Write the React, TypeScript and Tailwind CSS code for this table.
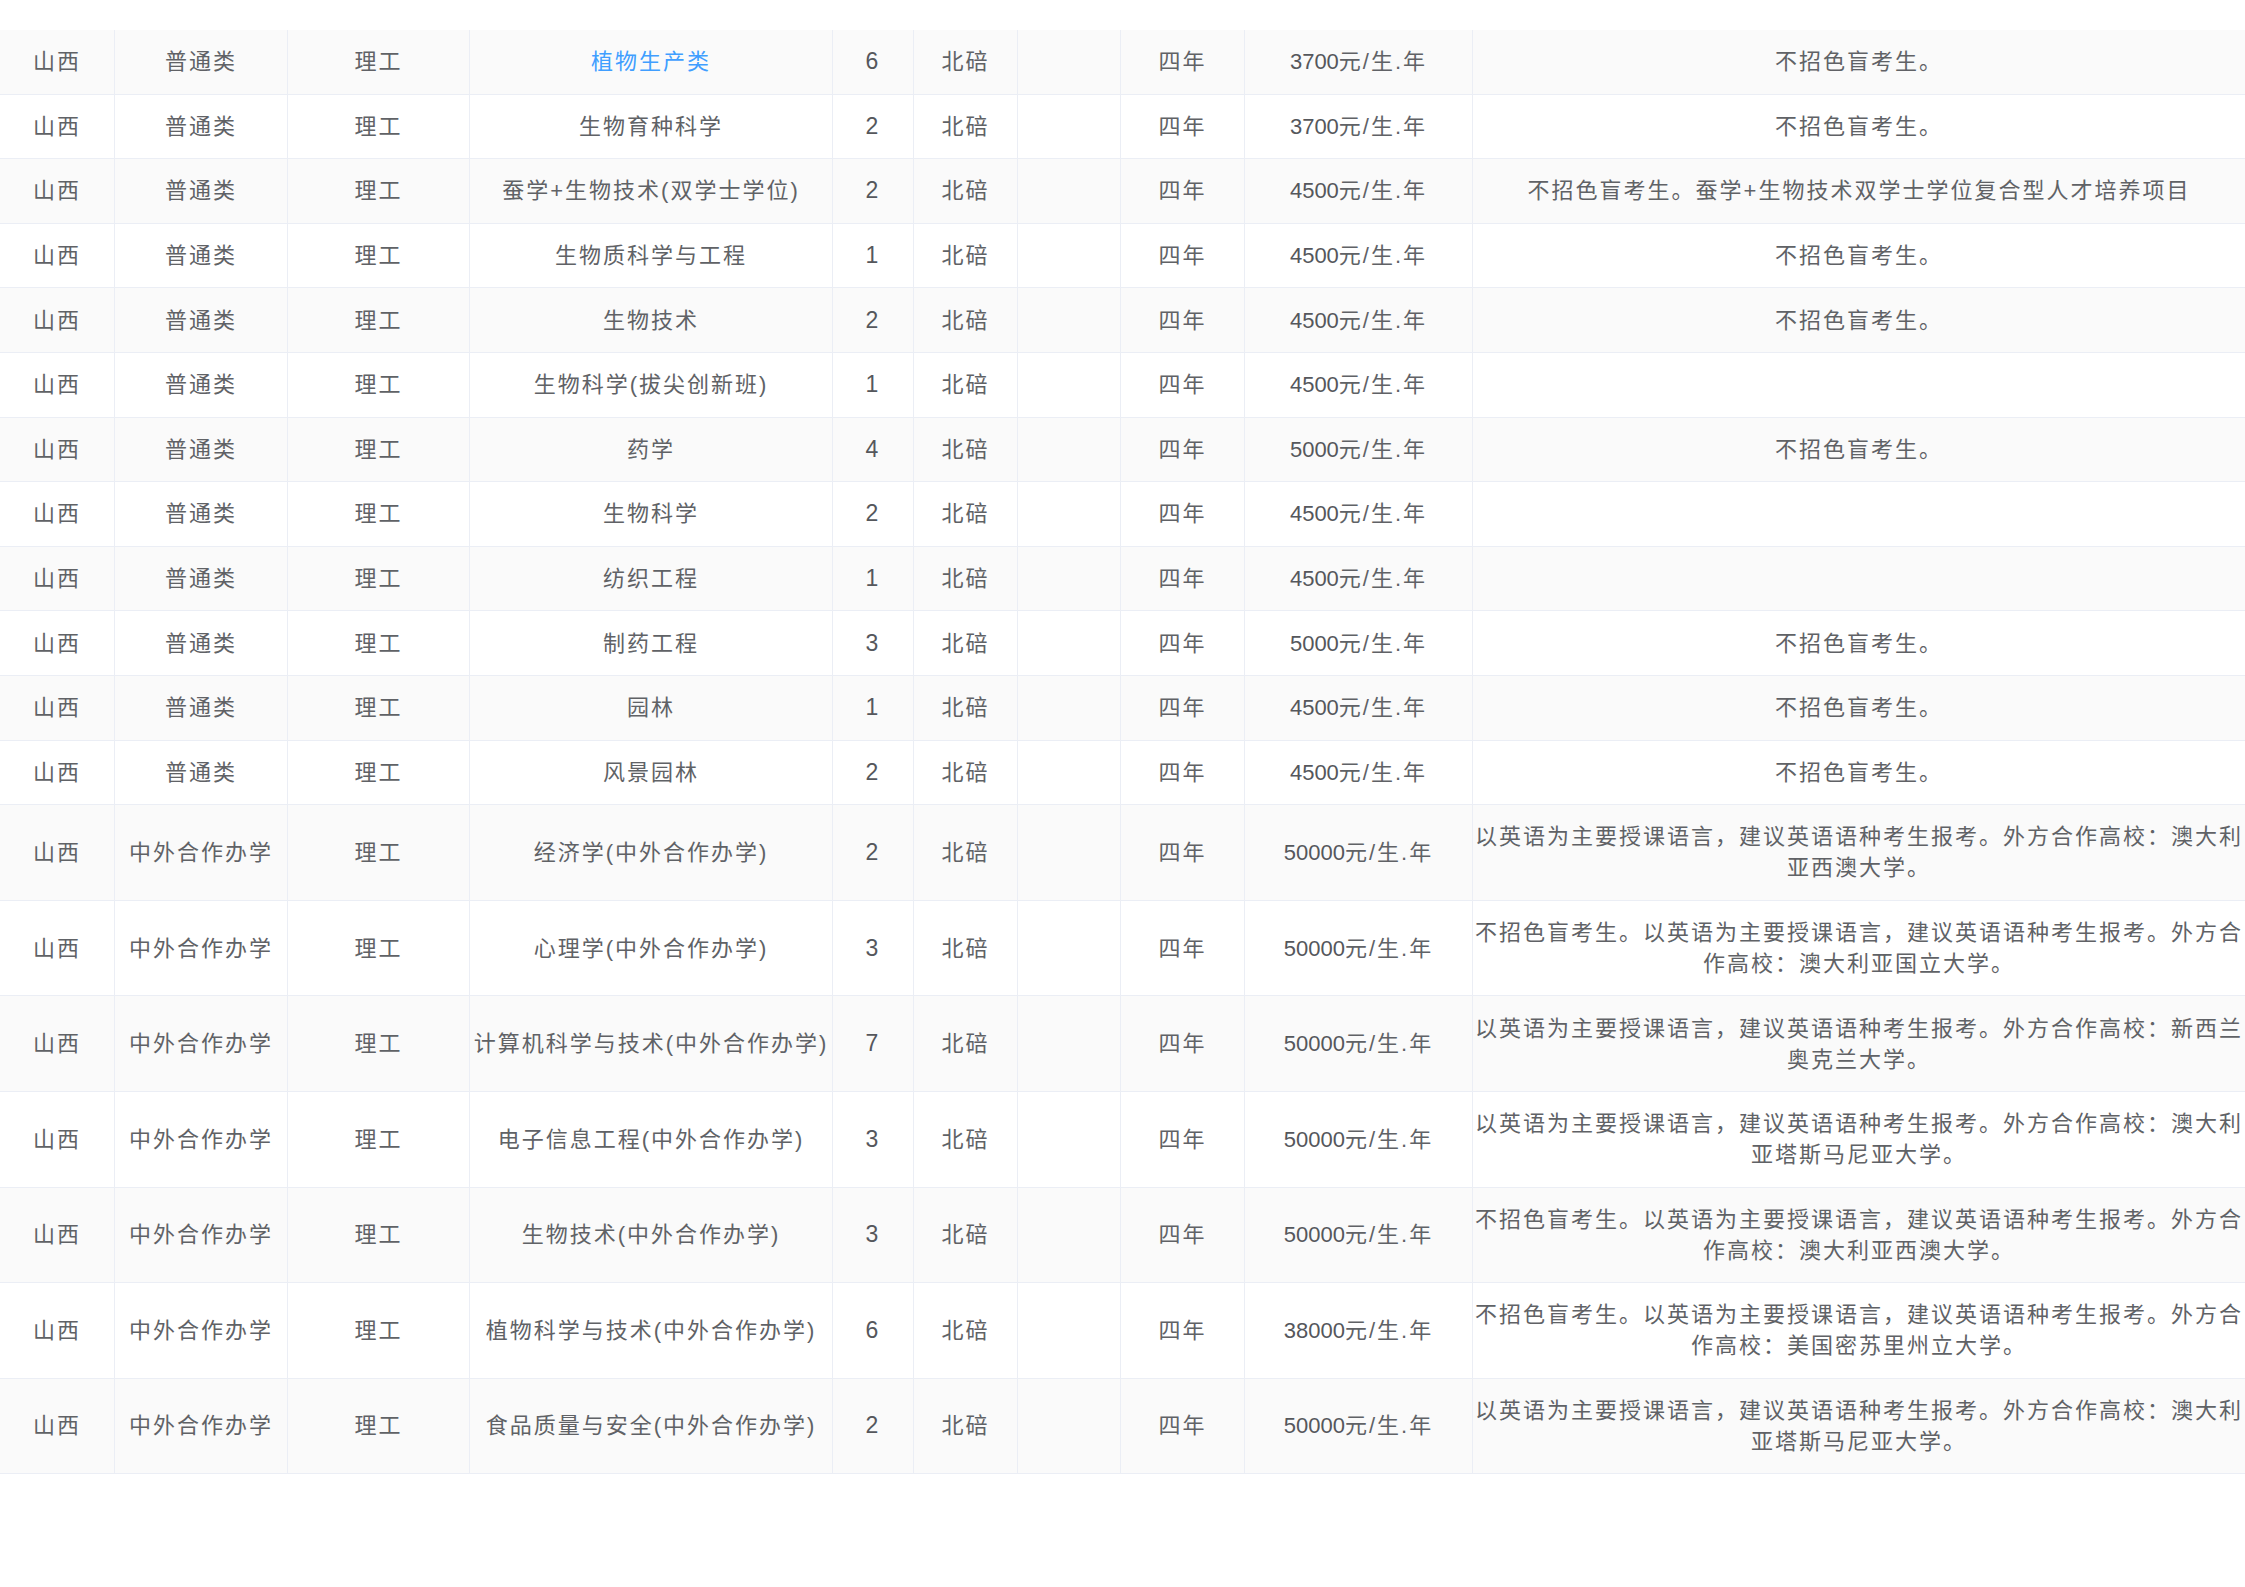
const COLS = "grid-cols-[115px_173px_182px_363px_81px_104px_103px_124px_228px_772px]";

const NO_COLOR = "不招色盲考生。";
const EN = "以英语为主要授课语言，建议英语语种考生报考。外方合作高校：";

type Row = {
  type: string;
  major: string;
  count: string;
  fee: string;
  note: string;
  link?: boolean;
};

const ROWS: Row[] = [
  { type: "普通类", major: "植物生产类", count: "6", fee: "3700", note: NO_COLOR, link: true },
  { type: "普通类", major: "生物育种科学", count: "2", fee: "3700", note: NO_COLOR },
  { type: "普通类", major: "蚕学+生物技术(双学士学位)", count: "2", fee: "4500", note: "不招色盲考生。蚕学+生物技术双学士学位复合型人才培养项目" },
  { type: "普通类", major: "生物质科学与工程", count: "1", fee: "4500", note: NO_COLOR },
  { type: "普通类", major: "生物技术", count: "2", fee: "4500", note: NO_COLOR },
  { type: "普通类", major: "生物科学(拔尖创新班)", count: "1", fee: "4500", note: "" },
  { type: "普通类", major: "药学", count: "4", fee: "5000", note: NO_COLOR },
  { type: "普通类", major: "生物科学", count: "2", fee: "4500", note: "" },
  { type: "普通类", major: "纺织工程", count: "1", fee: "4500", note: "" },
  { type: "普通类", major: "制药工程", count: "3", fee: "5000", note: NO_COLOR },
  { type: "普通类", major: "园林", count: "1", fee: "4500", note: NO_COLOR },
  { type: "普通类", major: "风景园林", count: "2", fee: "4500", note: NO_COLOR },
  { type: "中外合作办学", major: "经济学(中外合作办学)", count: "2", fee: "50000", note: EN + "澳大利亚西澳大学。" },
  { type: "中外合作办学", major: "心理学(中外合作办学)", count: "3", fee: "50000", note: NO_COLOR + EN + "澳大利亚国立大学。" },
  { type: "中外合作办学", major: "计算机科学与技术(中外合作办学)", count: "7", fee: "50000", note: EN + "新西兰奥克兰大学。" },
  { type: "中外合作办学", major: "电子信息工程(中外合作办学)", count: "3", fee: "50000", note: EN + "澳大利亚塔斯马尼亚大学。" },
  { type: "中外合作办学", major: "生物技术(中外合作办学)", count: "3", fee: "50000", note: NO_COLOR + EN + "澳大利亚西澳大学。" },
  { type: "中外合作办学", major: "植物科学与技术(中外合作办学)", count: "6", fee: "38000", note: NO_COLOR + EN + "美国密苏里州立大学。" },
  { type: "中外合作办学", major: "食品质量与安全(中外合作办学)", count: "2", fee: "50000", note: EN + "澳大利亚塔斯马尼亚大学。" },
];

function Cell({ children, last }: { children?: React.ReactNode; last?: boolean }) {
  return (
    <div
      className={
        "flex items-center justify-center text-center py-[16.3px] " +
        (last ? "" : "border-r border-[#ebeef5]")
      }
    >
      <div className="w-full break-all">{children}</div>
    </div>
  );
}

export default function App() {
  return (
    <div
      className="min-h-screen w-[2245px] overflow-hidden bg-white pt-[30px] text-[22px] leading-[31px] tracking-[2px] text-[#606266]"
      style={{ fontFamily: '"Liberation Sans", "Noto Sans CJK SC", sans-serif' }}
    >
      {ROWS.map((r, i) => (
        <div
          key={i}
          className={
            "grid border-b border-[#ebeef5] " +
            COLS +
            (i % 2 === 0 ? " bg-[#fafafa]" : " bg-white")
          }
        >
          <Cell>山西</Cell>
          <Cell>{r.type}</Cell>
          <Cell>理工</Cell>
          <Cell>
            {r.link ? <span className="text-[#409eff]">{r.major}</span> : r.major}
          </Cell>
          <Cell>
            <span className="text-[23px] text-[#55575c]">{r.count}</span>
          </Cell>
          <Cell>北碚</Cell>
          <Cell />
          <Cell>四年</Cell>
          <Cell>
            <span className="tracking-normal text-[#55575c]">{r.fee}</span>元/生.年
          </Cell>
          <Cell last>{r.note}</Cell>
        </div>
      ))}
    </div>
  );
}
